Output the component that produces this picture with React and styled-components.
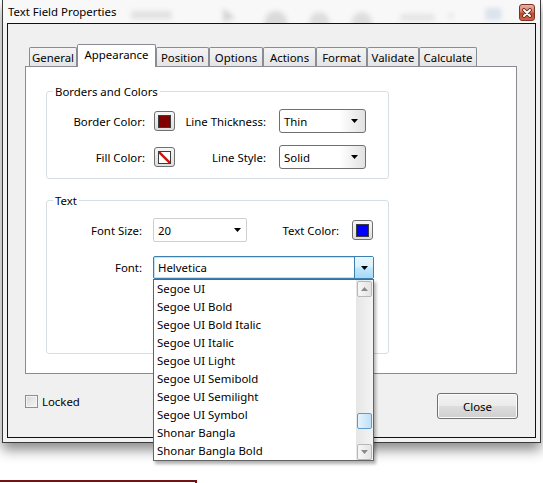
import React from 'react';
import styled, { createGlobalStyle } from 'styled-components';

const FS = '11.4px';

const GlobalStyle = createGlobalStyle`
  html, body { margin: 0; padding: 0; background: #fff; }
  body {
    font-family: "Noto Sans", "Open Sans", sans-serif;
    font-size: ${FS};
    color: #000;
  }
  * { box-sizing: border-box; }
`;

const fonts = [
  'Segoe UI',
  'Segoe UI Bold',
  'Segoe UI Bold Italic',
  'Segoe UI Italic',
  'Segoe UI Light',
  'Segoe UI Semibold',
  'Segoe UI Semilight',
  'Segoe UI Symbol',
  'Shonar Bangla',
  'Shonar Bangla Bold',
];

const tabs = [
  { name: 'General', w: 48 },
  { name: 'Appearance', w: 79, active: true },
  { name: 'Position', w: 53 },
  { name: 'Options', w: 54 },
  { name: 'Actions', w: 53 },
  { name: 'Format', w: 51 },
  { name: 'Validate', w: 52 },
  { name: 'Calculate', w: 58 },
];

function ColorSwatch({ color, none }) {
  return (
    <SwatchButton>
      <SwatchInner $color={color}>
        {none && (
          <svg width="11" height="11" viewBox="0 0 11 11">
            <path d="M0 0 L11 11" stroke="#d01010" strokeWidth="2.4" />
          </svg>
        )}
      </SwatchInner>
    </SwatchButton>
  );
}

function Arrow() {
  return (
    <svg width="7" height="4" viewBox="0 0 7 4">
      <path d="M0 0 H7 L3.5 4 Z" fill="#000" />
    </svg>
  );
}

function ScrollArrow({ up }) {
  return (
    <svg width="7" height="4" viewBox="0 0 7 4">
      <path d={up ? 'M0 4 H7 L3.5 0 Z' : 'M0 0 H7 L3.5 4 Z'} fill="#8a8a8a" />
    </svg>
  );
}

function App() {
  return (
    <Page>
      <GlobalStyle />
      <Window>
        <TitleBar>
          <TitleText>Text Field Properties</TitleText>
          <Ghost viewBox="0 0 395 23" preserveAspectRatio="xMinYMid slice">
            <defs>
              <filter id="blur">
                <feGaussianBlur stdDeviation="2.5" />
              </filter>
            </defs>
            <g filter="url(#blur)" opacity="0.2">
              <rect x="12" y="11" width="40" height="8" fill="#888" />
              <path d="M103 8 L115 18 L103 22 Z" fill="#444" />
              <circle cx="155" cy="22" r="11" fill="#666" />
              <circle cx="198" cy="22" r="10" fill="#777" />
              <circle cx="240" cy="22" r="10" fill="#777" />
              <rect x="278" y="14" width="34" height="7" fill="#999" />
              <path d="M324 14 L332 14 L328 19 Z" fill="#888" />
              <rect x="362" y="8" width="16" height="12" fill="#6a8fc0" />
            </g>
          </Ghost>
          <TitleClose>
            <svg width="10" height="10" viewBox="0 0 10 10">
              <path d="M2 2 L8 8 M8 2 L2 8" stroke="#5a2418" strokeWidth="3.6" strokeLinecap="round" />
              <path d="M2 2 L8 8 M8 2 L2 8" stroke="#fff" strokeWidth="2" strokeLinecap="round" />
            </svg>
          </TitleClose>
        </TitleBar>

        <Client>
          <TabStrip>
            {tabs.map(t => (
              <Tab key={t.name} $w={t.w} $active={t.active}>
                {t.name}
              </Tab>
            ))}
          </TabStrip>

          <Panel>
            <Group>
              <Legend>Borders and Colors</Legend>
              <Row>
                <FieldLabel $w={98}>Border Color:</FieldLabel>
                <Spacer $w={9} />
                <ColorSwatch color="#800000" />
                <FieldLabel $w={91}>Line Thickness:</FieldLabel>
                <Spacer $w={13} />
                <DropSelect>
                  <SelectValue>Thin</SelectValue>
                  <SelectButton><Arrow /></SelectButton>
                </DropSelect>
              </Row>
              <Row $top={12}>
                <FieldLabel $w={98}>Fill Color:</FieldLabel>
                <Spacer $w={9} />
                <ColorSwatch color="#fff" none />
                <FieldLabel $w={91}>Line Style:</FieldLabel>
                <Spacer $w={13} />
                <DropSelect>
                  <SelectValue>Solid</SelectValue>
                  <SelectButton><Arrow /></SelectButton>
                </DropSelect>
              </Row>
            </Group>

            <Group $top={14} $bottom={74}>
              <Legend>Text</Legend>
              <Row>
                <FieldLabel $w={95}>Font Size:</FieldLabel>
                <Spacer $w={11} />
                <FlatSelect>
                  <SelectValue>20</SelectValue>
                  <Arrow />
                </FlatSelect>
                <FieldLabel $w={92}>Text Color:</FieldLabel>
                <Spacer $w={13} />
                <ColorSwatch color="#0000ff" />
              </Row>
              <Row $top={14} $h={23}>
                <FieldLabel $w={95}>Font:</FieldLabel>
                <Spacer $w={11} />
                <FontCombo>
                  <SelectValue>Helvetica</SelectValue>
                  <ComboButton><Arrow /></ComboButton>
                  <DropList>
                    <Items>
                      {fonts.map(f => (
                        <Item key={f}>{f}</Item>
                      ))}
                    </Items>
                    <ScrollBar>
                      <ScrollButton><ScrollArrow up /></ScrollButton>
                      <Thumb />
                      <ScrollButton $down><ScrollArrow /></ScrollButton>
                    </ScrollBar>
                  </DropList>
                </FontCombo>
              </Row>
            </Group>
          </Panel>

          <Footer>
            <CheckRow>
              <CheckBox />
              <span>Locked</span>
            </CheckRow>
            <PushButton>Close</PushButton>
          </Footer>
        </Client>
      </Window>
      <RedFrame />
    </Page>
  );
}

const Page = styled.div`
  width: 543px;
  height: 483px;
  overflow: hidden;
  background: #fff;
`;

const Window = styled.div`
  margin-left: 2px;
  width: 539px;
  height: 443px;
  border: 1px solid #3a3a3a;
  border-top: none;
  background: #f1f2f4;
  padding: 0 4px 4px;
  box-shadow: 0 7px 12px rgba(0, 0, 0, 0.45);
  display: flex;
  flex-direction: column;
`;

const TitleBar = styled.div`
  height: 23px;
  display: flex;
  align-items: flex-start;
  background: #f8f8f8;
  margin: 0 -4px;
  padding: 0 5px 0 5px;
`;

const TitleText = styled.div`
  padding-top: 4px;
  line-height: 16px;
  font-size: ${FS};
  color: #000;
  white-space: nowrap;
`;

const Ghost = styled.svg`
  flex: 1;
  height: 23px;
  margin-left: 3px;
`;

const TitleClose = styled.div`
  width: 16px;
  height: 17px;
  margin-top: 4px;
  border: 1px solid #7a3323;
  border-radius: 3px;
  background: linear-gradient(#eab2a4, #d77b66 45%, #c2452d 55%, #d0634a);
  display: flex;
  align-items: center;
  justify-content: center;
`;

const Client = styled.div`
  height: 415px;
  border: 1px solid #111;
  background: #f0f0f0;
  padding: 20px 0 0 17px;
`;

const TabStrip = styled.div`
  height: 22px;
  display: flex;
  align-items: flex-end;
  padding-left: 4px;
`;

const Tab = styled.div`
  width: ${p => p.$w}px;
  height: ${p => (p.$active ? 23 : 19)}px;
  margin-bottom: ${p => (p.$active ? -1 : 0)}px;
  position: relative;
  z-index: ${p => (p.$active ? 1 : 0)};
  border: 1px solid #898c95;
  border-bottom: none;
  border-radius: 2px 2px 0 0;
  background: ${p => (p.$active ? '#fff' : 'linear-gradient(#f4f4f4, #e4e4e4)')};
  display: flex;
  align-items: center;
  justify-content: center;
  padding-bottom: ${p => (p.$active ? 4 : 0)}px;
  font-size: ${FS};
  white-space: nowrap;
`;

const Panel = styled.div`
  width: 492px;
  height: 308px;
  border: 1px solid #898c95;
  background: #fff;
  padding: 17px 0 0 20px;
`;

const Group = styled.fieldset`
  width: 343px;
  margin: ${p => p.$top || 0}px 0 0 0;
  padding: 0 0 ${p => (p.$bottom === undefined ? 9 : p.$bottom)}px 0;
  border: 1px solid #d5dfe5;
  border-radius: 3px;
  min-width: 0;
`;

const Legend = styled.legend`
  margin-left: 6px;
  padding: 0 2px;
  line-height: 15px;
  font-size: ${FS};
  color: #000;
`;

const Row = styled.div`
  display: flex;
  align-items: center;
  height: ${p => p.$h || 24}px;
  margin-top: ${p => (p.$top === undefined ? 10 : p.$top)}px;
`;

const FieldLabel = styled.div`
  width: ${p => p.$w}px;
  text-align: right;
  white-space: nowrap;
  font-size: ${FS};
`;

const Spacer = styled.div`
  width: ${p => p.$w}px;
  flex-shrink: 0;
`;

const SwatchButton = styled.div`
  width: 21px;
  height: 20px;
  border: 1px solid #707070;
  border-radius: 3px;
  background: linear-gradient(#f6f6f6, #dedede);
  display: flex;
  align-items: center;
  justify-content: center;
  flex-shrink: 0;
`;

const SwatchInner = styled.div`
  width: 13px;
  height: 13px;
  border: 1px solid #3c3c3c;
  background: ${p => p.$color};
  display: flex;
  overflow: hidden;
`;

const DropSelect = styled.div`
  width: 87px;
  height: 24px;
  border: 1px solid #707070;
  border-radius: 3px;
  background: linear-gradient(90deg, #fff 70%, #e2e2e2);
  display: flex;
  align-items: center;
  padding: 2px;
`;

const SelectValue = styled.div`
  flex: 1;
  padding-left: 2px;
  font-size: ${FS};
  white-space: nowrap;
`;

const SelectButton = styled.div`
  width: 17px;
  height: 100%;
  display: flex;
  align-items: center;
  justify-content: center;
`;

const FlatSelect = styled.div`
  width: 94px;
  height: 24px;
  border: 1px solid #cfcfcf;
  border-radius: 2px;
  background: #fff;
  display: flex;
  align-items: center;
  padding: 0 5px 0 2px;
`;

const FontCombo = styled.div`
  position: relative;
  width: 221px;
  height: 23px;
  border: 1px solid #3c7fb1;
  border-radius: 2px;
  background: #fff;
  display: flex;
  align-items: center;
  padding-left: 2px;
  box-shadow: inset 0 0 0 1px #c7e1f3;
`;

const ComboButton = styled.div`
  width: 19px;
  height: 100%;
  border-left: 1px solid #3c7fb1;
  background: linear-gradient(#eaf6fd, #d9f0fc 45%, #bee6fd 55%, #a7d9f5);
  display: flex;
  align-items: center;
  justify-content: center;
`;

const DropList = styled.div`
  position: absolute;
  top: 22px;
  left: -1px;
  width: 221px;
  height: 182px;
  border: 1px solid #646464;
  background: #fff;
  box-shadow: 2px 3px 3px rgba(0, 0, 0, 0.3);
  display: flex;
  z-index: 5;
`;

const Items = styled.div`
  flex: 1;
  padding-top: 0;
`;

const Item = styled.div`
  height: 18px;
  line-height: 18px;
  padding-left: 3px;
  font-size: ${FS};
  white-space: nowrap;
`;

const ScrollBar = styled.div`
  width: 17px;
  background: linear-gradient(90deg, #e6e6e6, #f4f4f4);
  display: flex;
  flex-direction: column;
  align-items: center;
  padding-top: 1px;
`;

const ScrollButton = styled.div`
  width: 15px;
  height: 16px;
  margin-top: ${p => (p.$down ? 15 : 0)}px;
  border: 1px solid #b8b8b8;
  border-radius: 2px;
  background: linear-gradient(90deg, #f7f7f7, #e3e3e3);
  display: flex;
  align-items: center;
  justify-content: center;
`;

const Thumb = styled.div`
  width: 15px;
  height: 16px;
  margin-top: 116px;
  border: 1px solid #5d9ccc;
  border-radius: 2px;
  background: linear-gradient(90deg, #e5f3fc, #bfe0f6);
`;

const Footer = styled.div`
  width: 493px;
  margin-top: 19px;
  display: flex;
  justify-content: space-between;
  align-items: flex-start;
`;

const CheckRow = styled.div`
  display: flex;
  align-items: center;
  gap: 4px;
  margin-top: 1px;
  font-size: ${FS};
`;

const CheckBox = styled.div`
  width: 13px;
  height: 13px;
  border: 1px solid #8f8f8f;
  background: linear-gradient(135deg, #d8d8d8, #f6f6f6);
  box-shadow: inset 0 0 0 1px #f4f4f4;
`;

const PushButton = styled.div`
  width: 81px;
  height: 26px;
  border: 1px solid #707070;
  border-radius: 3px;
  background: linear-gradient(#f2f2f2, #ebebeb 48%, #dddddd 52%, #cfcfcf);
  box-shadow: inset 0 0 0 1px #fcfcfc;
  display: flex;
  align-items: center;
  justify-content: center;
  font-size: ${FS};
`;

const RedFrame = styled.div`
  width: 197px;
  height: 10px;
  margin-top: 37px;
  border-top: 2px solid #741212;
  border-right: 2px solid #741212;
`;

export default App;
